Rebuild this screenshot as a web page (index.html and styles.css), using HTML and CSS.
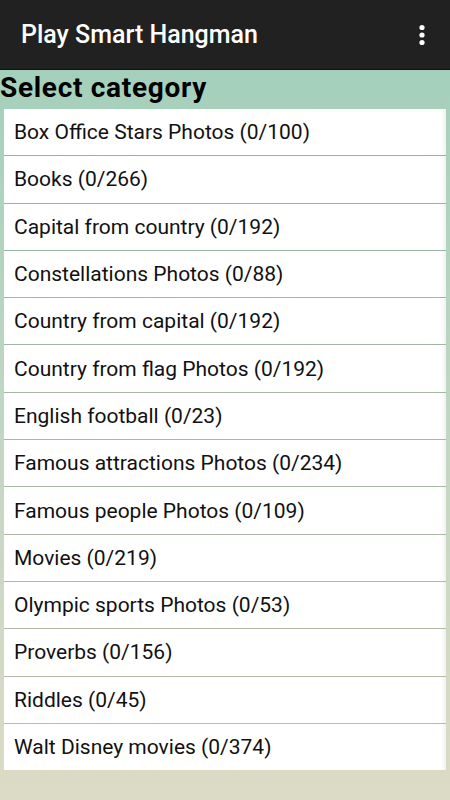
FILE: index.html
```html
<!DOCTYPE html>
<html lang="en">
<head>
  <meta charset="UTF-8">
  <meta name="viewport" content="width=device-width, initial-scale=1.0">
  <title>Play Smart Hangman</title>
  <link rel="stylesheet" href="styles.css">
</head>
<body>
  <div class="appbar">
    <div class="title">Play Smart Hangman</div>
    <div class="menu">
      <svg width="8" height="24" viewBox="0 0 8 24">
        <circle cx="4" cy="4.5" r="2.6" fill="#fff"/>
        <circle cx="4" cy="12" r="2.6" fill="#fff"/>
        <circle cx="4" cy="19.5" r="2.6" fill="#fff"/>
      </svg>
    </div>
  </div>

  <div class="content">
    <div class="heading">Select category</div>
    <div class="list">
      <div class="item">Box Office Stars Photos (0/100)</div>
      <div class="item">Books (0/266)</div>
      <div class="item">Capital from country (0/192)</div>
      <div class="item">Constellations Photos (0/88)</div>
      <div class="item">Country from capital (0/192)</div>
      <div class="item">Country from flag Photos (0/192)</div>
      <div class="item">English football (0/23)</div>
      <div class="item">Famous attractions Photos (0/234)</div>
      <div class="item">Famous people Photos (0/109)</div>
      <div class="item">Movies (0/219)</div>
      <div class="item">Olympic sports Photos (0/53)</div>
      <div class="item">Proverbs (0/156)</div>
      <div class="item">Riddles (0/45)</div>
      <div class="item">Walt Disney movies (0/374)</div>
    </div>
  </div>
</body>
</html>
```

FILE: styles.css
```css
body {
  margin: 0;
  padding: 0;
  width: 450px;
  height: 800px;
  overflow: hidden;
  font-family: Roboto, "Noto Sans", Arial, sans-serif;
  background: #212121;
}

.appbar {
  height: 69px;
  background-color: #212121;
  display: flex;
  align-items: center;
  justify-content: space-between;
  padding: 0 24px 0 21px;
  border-bottom: 1px solid #111;
}

.title {
  color: #fff;
  font-size: 25px;
  font-weight: 500;
  padding-bottom: 1px;
}

.menu {
  display: flex;
  align-items: center;
}

.menu svg {
  display: block;
}

.content {
  height: 730px;
  background: linear-gradient(to bottom, #a4d0bb 0%, #bfd6c2 45%, #dcdbc5 100%);
}

.heading {
  font-size: 28px;
  font-weight: 700;
  color: #000;
  height: 39px;
  line-height: 36px;
  letter-spacing: 0.7px;
}

.list {
  margin: 0 4px;
  display: flex;
  flex-direction: column;
  gap: 1px;
  background-color: rgba(0, 0, 0, 0.14);
}

.item {
  height: 46.3px;
  background-color: #fff;
  display: flex;
  align-items: center;
  padding-left: 10px;
  font-size: 21px;
  color: #111;
  box-shadow: inset -5px 0 4px -3px rgba(0, 0, 0, 0.07);
}
```
